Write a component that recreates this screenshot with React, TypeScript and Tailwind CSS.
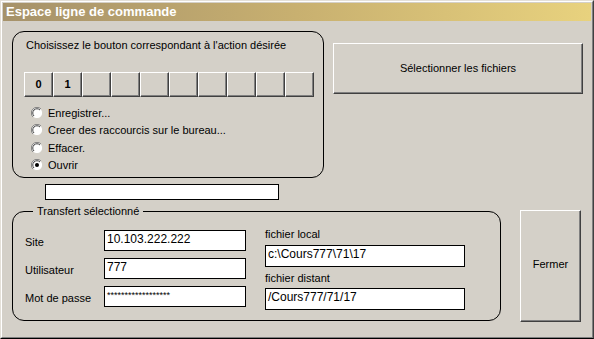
import React from "react";

const raised =
  "border border-t-white border-l-white border-r-[#404040] border-b-[#404040] shadow-[inset_-1px_-1px_0_#808080] bg-[#d4d0c8]";

function Radio({ label, checked }: { label: string; checked?: boolean }) {
  return (
    <div className="flex h-[17.5px] items-center">
      <svg width="12" height="12" viewBox="0 0 12 12" className="ml-[18px] shrink-0">
        <circle cx="6" cy="6" r="5.5" fill="#ffffff" />
        <path d="M10 2 A5.5 5.5 0 0 0 2 10" fill="none" stroke="#808080" strokeWidth="1" />
        <path d="M9 3 A4.2 4.2 0 0 0 3 9" fill="none" stroke="#404040" strokeWidth="1" />
        <path d="M2 10 A5.5 5.5 0 0 0 10 2" fill="none" stroke="#d4d0c8" strokeWidth="1" />
        {checked && <circle cx="6" cy="6" r="2" fill="#000000" />}
      </svg>
      <span className="ml-[5px]">{label}</span>
    </div>
  );
}

function Field({ value, w, h, small }: { value: string; w: string; h: string; small?: boolean }) {
  return (
    <div className={`${w} ${h} border border-black bg-white pl-[2px] leading-[16px] ${small ? "text-[9px]" : "text-[12px]"}`}>
      {value}
    </div>
  );
}

export default function App() {
  const keys = ["0", "1", "", "", "", "", "", "", "", ""];
  return (
    <div
      className="w-[594px] h-[339px] bg-[#d4d0c8] text-black text-[11px] border border-t-[#e4e0d8] border-l-[#e4e0d8] border-r-[#404040] border-b-black"
      style={{ fontFamily: '"Liberation Sans", Arial, sans-serif' }}
    >
      <div className="h-full border border-t-white border-l-white border-r-[#808080] border-b-[#808080] p-px">
        <div className="h-[18px] bg-gradient-to-r from-[#a6926a] via-[#c8b070] to-[#e8d27e] pl-[3px] flex items-center font-bold text-white text-[13px]">
          Espace ligne de commande
        </div>

        <div className="flex items-start pl-[9px] mt-[10px]">
          <div className="flex flex-col">
            <div className="w-[312px] h-[147px] border border-black rounded-[12px]">
              <div className="pl-[13px] pt-[6px] leading-[14px]">
                Choisissez le bouton correspondant à l'action désirée
              </div>
              <div className="flex ml-[11px] mt-[20px]">
                {keys.map((k, i) => (
                  <div key={i} className={`${raised} w-[29px] h-[25px] flex items-center justify-center font-bold`}>
                    {k}
                  </div>
                ))}
              </div>
              <div className="mt-[7px] flex flex-col">
                <Radio label="Enregistrer..." />
                <Radio label="Creer des raccourcis sur le bureau..." />
                <Radio label="Effacer." />
                <Radio label="Ouvrir" checked />
              </div>
            </div>
            <div className="ml-[33px] mt-[6px] w-[234px] h-[16px] border border-black bg-white" />
          </div>

          <div className={`${raised} ml-[9px] mt-[12px] w-[250px] h-[51px] flex items-center justify-center`}>
            Sélectionner les fichiers
          </div>
        </div>

        <div className="flex items-start pl-[9px] mt-[11px]">
          <div className="relative w-[489px] h-[110px] border border-black rounded-[12px] flex">
            <span className="absolute left-[20px] -top-[8px] px-[4px] bg-[#d4d0c8] leading-[14px]">
              Transfert sélectionné
            </span>
            <div className="flex flex-col pt-[18px] pl-[12px] gap-[7px]">
              {[
                ["Site", "10.103.222.222", false],
                ["Utilisateur", "777", false],
                ["Mot de passe", "******************", true],
              ].map(([l, v, s], i) => (
                <div key={i} className="flex items-center">
                  <span className="w-[79px] pt-[4px]">{l as string}</span>
                  <Field value={v as string} w="w-[142px]" h="h-[21px]" small={s as boolean} />
                </div>
              ))}
            </div>
            <div className="flex flex-col pl-[19px] pt-[15px]">
              <span className="leading-[14px]">fichier local</span>
              <div className="mt-[4px]">
                <Field value="c:\Cours777\71\17" w="w-[200px]" h="h-[22px]" />
              </div>
              <span className="leading-[14px] mt-[4px]">fichier distant</span>
              <div className="mt-[3px]">
                <Field value="/Cours777/71/17" w="w-[200px]" h="h-[22px]" />
              </div>
            </div>
          </div>
          <div className={`${raised} ml-[19px] -mt-px w-[61px] h-[112px] flex items-center justify-center pb-[4px]`}>
            Fermer
          </div>
        </div>
      </div>
    </div>
  );
}
